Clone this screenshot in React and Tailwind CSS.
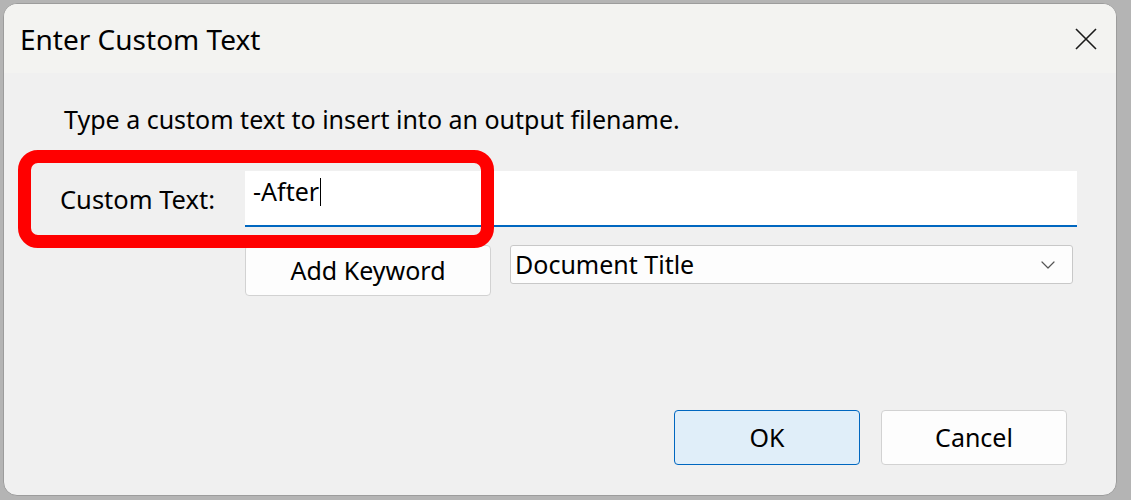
import { ChevronDown } from "lucide-react";

const font = { fontFamily: '"Noto Sans", "Open Sans", sans-serif' };

export default function App() {
  return (
    <div
      className="relative w-[1131px] h-[500px] overflow-hidden bg-[#b4b4b4] pl-[3px] pt-[3px]"
      style={font}
    >
      <div className="relative flex h-[493px] w-[1114px] flex-col overflow-hidden rounded-[14px] border border-[#9c9c9c] bg-[#f0f0f0] text-black">
        <div className="flex h-[69px] items-center justify-between bg-[#f3f3f1] pl-[16px] pr-[19px]">
          <span className="text-[28px] leading-none">Enter Custom Text</span>
          <svg width="22" height="22" viewBox="0 0 22 22" className="text-[#1a1a1a]">
            <path d="M1 1L21 21M21 1L1 21" stroke="currentColor" strokeWidth="1.6" fill="none" />
          </svg>
        </div>

        <div className="flex flex-1 flex-col pl-[56px]">
          <p className="mt-[30px] pl-[4px] text-[25px] leading-[32px]">
            Type a custom text to insert into an output filename.
          </p>

          <div className="mt-[36px] flex items-center">
            <span className="w-[185px] text-[25.5px]">Custom Text:</span>
            <div className="flex h-[56px] w-[832px] items-center border-b-2 border-[#0067c0] bg-white pb-[12px] pl-[8px] text-[25px]">
              -After
              <span className="ml-[1px] h-[28px] w-px bg-black" />
            </div>
          </div>

          <div className="mt-[18px] flex items-start gap-[19px] pl-[185px]">
            <button className="h-[51px] w-[246px] rounded-[4px] border border-[#d2d2d2] bg-[#fdfdfd] text-[25px]">
              Add Keyword
            </button>
            <div className="flex h-[39px] w-[563px] items-center justify-between rounded-[3px] border border-[#c8c8c8] bg-[#fdfdfd] pl-[4px] pr-[12px] text-[25px]">
              <span>Document Title</span>
              <ChevronDown size={24} strokeWidth={1.2} className="text-[#555]" />
            </div>
          </div>

          <div className="mt-auto mb-[30px] flex justify-end gap-[21px] pr-[49px]">
            <button className="h-[55px] w-[186px] rounded-[4px] border border-[#0067c0] bg-[#e0eef9] text-[25px]">
              OK
            </button>
            <button className="h-[55px] w-[186px] rounded-[4px] border border-[#d2d2d2] bg-[#fdfdfd] text-[25px]">
              Cancel
            </button>
          </div>
        </div>
      </div>

      <div className="absolute left-[18px] top-[150px] h-[98px] w-[476px] rounded-[20px] border-[13px] border-[#ff0000]" />
    </div>
  );
}
